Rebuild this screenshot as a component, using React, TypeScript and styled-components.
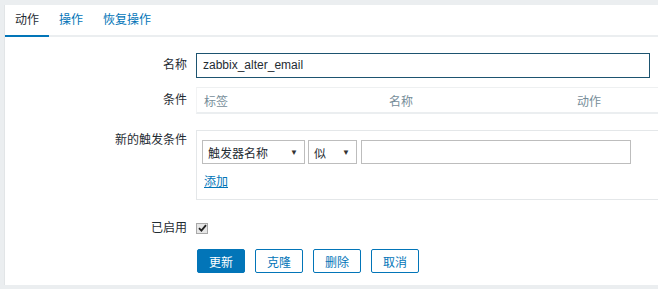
import React, { FC } from 'react';
import styled, { createGlobalStyle, css } from 'styled-components';

const GlobalStyle = createGlobalStyle`
	html, body {
		margin: 0;
		padding: 0;
		background: #ebeef0;
		overflow: hidden;
		font-family: 'Liberation Sans', 'Noto Sans CJK SC', sans-serif;
		font-size: 12px;
		color: #1f2c33;
	}
`;

const Panel = styled.div`
	margin: 5px 0 0 4px;
	background: #ffffff;
	border-left: 1px solid #e2e5e7;
	padding-bottom: 12px;
`;

const TabBar = styled.ul`
	display: flex;
	list-style: none;
	margin: 0;
	padding: 0;
	height: 30px;
	border-bottom: 2px solid #ebeef0;
`;

const Tab = styled.li<{ active?: boolean }>`
	padding: 0 10px;
	line-height: 30px;
	height: 30px;
	color: #0275b8;
	${({ active }) =>
		active &&
		css`
			color: #1f2c33;
			border-bottom: 2px solid #0275b8;
		`}
`;

const Form = styled.div`
	padding-top: 16px;
`;

const Row = styled.div<{ gap: number }>`
	display: grid;
	grid-template-columns: 182px 1fr;
	column-gap: 9px;
	margin-top: ${({ gap }) => gap}px;
`;

const Label = styled.div<{ lh: number }>`
	text-align: right;
	line-height: ${({ lh }) => lh}px;
	white-space: nowrap;
`;

const TextInput = styled.div`
	box-sizing: border-box;
	width: 454px;
	height: 25px;
	border: 1px solid #1d5470;
	padding: 0 6px;
	line-height: 23px;
	font-size: 12px;
	background: #ffffff;
`;

const CondTable = styled.div`
	display: grid;
	grid-template-columns: 185px 188px 1fr;
	height: 27px;
	box-sizing: border-box;
	border-top: 1px solid #eef0f1;
	border-left: 1px solid #f2f3f4;
	border-bottom: 2px solid #ebeef0;
	align-items: center;
	color: #768d99;
`;

const HeadCell = styled.div`
	padding-left: 7px;
`;

const Box = styled.div`
	box-sizing: border-box;
	height: 70px;
	border: 1px solid #e4e7e9;
	border-right: none;
	padding: 9px 5px 0;
`;

const Controls = styled.div`
	display: flex;
	gap: 3px;
`;

const Select = styled.div<{ w: number }>`
	box-sizing: border-box;
	width: ${({ w }) => w}px;
	height: 24px;
	border: 1px solid #bdbdbd;
	display: flex;
	align-items: center;
	justify-content: space-between;
	padding: 0 6px 0 5px;
	background: #ffffff;
`;

const Arrow = styled.span`
	font-size: 8px;
	color: #333;
`;

const PlainInput = styled.div`
	box-sizing: border-box;
	width: 270px;
	height: 24px;
	border: 1px solid #bdbdbd;
	margin-left: 1px;
`;

const AddLink = styled.a`
	display: inline-block;
	margin: 10px 0 0 2px;
	color: #0275b8;
	text-decoration: underline;
	line-height: 16px;
`;

const CheckWrap = styled.div`
	display: flex;
	align-items: center;
	height: 22px;
`;

const CheckBox = styled.span`
	box-sizing: border-box;
	width: 12px;
	height: 11px;
	border: 1px solid #a8a8a8;
	background: #e6e6e6;
	display: flex;
	align-items: center;
	justify-content: center;
`;

const Buttons = styled.div`
	display: flex;
	gap: 10px;
	padding-left: 1px;
`;

const Button = styled.button<{ primary?: boolean }>`
	box-sizing: border-box;
	width: 48px;
	height: 24px;
	border: 1px solid #0275b8;
	border-radius: 2px;
	background: ${({ primary }) => (primary ? '#0275b8' : '#ffffff')};
	color: ${({ primary }) => (primary ? '#ffffff' : '#0275b8')};
	font-family: 'Liberation Sans', 'Noto Sans CJK SC', sans-serif;
	font-size: 12px;
	padding: 0;
	cursor: pointer;
`;

const App: FC = () => {
	return (
		<>
			<GlobalStyle />
			<Panel>
				<TabBar>
					<Tab active>动作</Tab>
					<Tab>操作</Tab>
					<Tab>恢复操作</Tab>
				</TabBar>
				<Form>
					<Row gap={0}>
						<Label lh={25}>名称</Label>
						<TextInput>zabbix_alter_email</TextInput>
					</Row>
					<Row gap={9}>
						<Label lh={27}>条件</Label>
						<CondTable>
							<HeadCell>标签</HeadCell>
							<HeadCell>名称</HeadCell>
							<HeadCell>动作</HeadCell>
						</CondTable>
					</Row>
					<Row gap={16}>
						<Label lh={20}>新的触发条件</Label>
						<Box>
							<Controls>
								<Select w={103}>
									<span>触发器名称</span>
									<Arrow>▼</Arrow>
								</Select>
								<Select w={49}>
									<span>似</span>
									<Arrow>▼</Arrow>
								</Select>
								<PlainInput />
							</Controls>
							<AddLink>添加</AddLink>
						</Box>
					</Row>
					<Row gap={17}>
						<Label lh={22}>已启用</Label>
						<CheckWrap>
							<CheckBox>
								<svg width="9" height="8" viewBox="0 0 9 8">
									<path d="M1 4.2 L3.4 6.6 L8 1.2" fill="none" stroke="#222" strokeWidth="1.8" />
								</svg>
							</CheckBox>
						</CheckWrap>
					</Row>
					<Row gap={10}>
						<div />
						<Buttons>
							<Button primary>更新</Button>
							<Button>克隆</Button>
							<Button>删除</Button>
							<Button>取消</Button>
						</Buttons>
					</Row>
				</Form>
			</Panel>
		</>
	);
};

export default App;
